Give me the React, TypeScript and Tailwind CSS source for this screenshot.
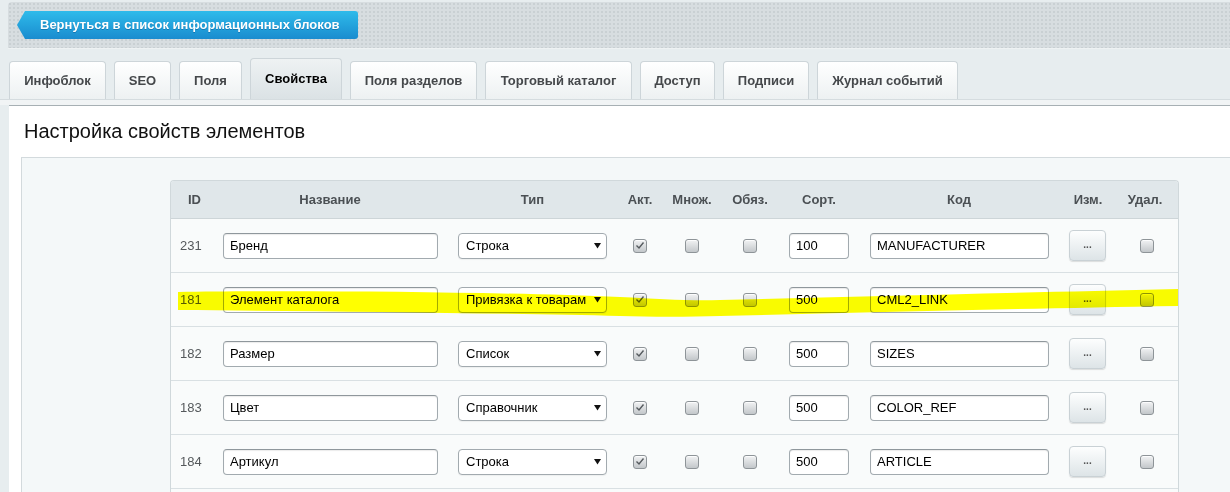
import React from "react";

type Row = { id: string; name: string; type: string; sort: string; code: string };

const rows: Row[] = [
  { id: "231", name: "Бренд", type: "Строка", sort: "100", code: "MANUFACTURER" },
  { id: "181", name: "Элемент каталога", type: "Привязка к товарам", sort: "500", code: "CML2_LINK" },
  { id: "182", name: "Размер", type: "Список", sort: "500", code: "SIZES" },
  { id: "183", name: "Цвет", type: "Справочник", sort: "500", code: "COLOR_REF" },
  { id: "184", name: "Артикул", type: "Строка", sort: "500", code: "ARTICLE" },
];

const tabs = [
  { label: "Инфоблок", w: "w-[97px]" },
  { label: "SEO", w: "w-[57px]" },
  { label: "Поля", w: "w-[63px]" },
  { label: "Свойства", w: "w-[92px]", active: true },
  { label: "Поля разделов", w: "w-[127px]" },
  { label: "Торговый каталог", w: "w-[147px]" },
  { label: "Доступ", w: "w-[75px]" },
  { label: "Подписи", w: "w-[86px]" },
  { label: "Журнал событий", w: "w-[141px]" },
];

function Checkbox({ checked }: { checked?: boolean }) {
  return (
    <div className="w-[14px] h-[14px] rounded-[3px] border border-[#8e9498] bg-linear-to-b from-[#f2f3f4] to-[#c3c7ca] shadow-[inset_0_1px_0_rgba(255,255,255,0.8)] flex items-center justify-center">
      {checked && (
        <svg width="10" height="9" viewBox="0 0 10 9">
          <path d="M1.5 4.5 L4 7 L8.5 1.5" fill="none" stroke="#555a5e" strokeWidth="1.4" />
        </svg>
      )}
    </div>
  );
}

function TextInput({ value, w }: { value: string; w: string }) {
  return (
    <div
      className={`${w} h-[26px] rounded-[4px] border border-[#a2aaaf] border-t-[#8f979c] bg-white shadow-[inset_0_1px_1px_rgba(0,0,0,0.08)] flex items-center pl-[6px] text-[13px] text-black overflow-hidden whitespace-nowrap`}
    >
      {value}
    </div>
  );
}

function Select({ value }: { value: string }) {
  return (
    <div className="w-[149px] h-[26px] rounded-[4px] border border-[#a2aaaf] bg-white shadow-[0_1px_1px_rgba(0,0,0,0.05)] flex items-center pl-[7px] pr-[5px] text-[13px] text-black">
      <span className="flex-1 overflow-hidden whitespace-nowrap">{value}</span>
      <svg width="7" height="7" viewBox="0 0 7 7" className="ml-[3px] shrink-0">
        <path d="M0 1 L7 1 L3.5 6.5 Z" fill="#111" />
      </svg>
    </div>
  );
}

const cols = "grid grid-cols-[47px_230px_169px_46px_58px_58px_80px_200px_58px_60px]";

export default function App() {
  return (
    <div className="relative w-[1230px] h-[492px] overflow-hidden bg-[#e7edef] font-['Liberation_Sans',Arial,sans-serif]">
      {/* top bar */}
      <div className="pt-[2px] pl-[8px]">
        <div className="h-[47px] rounded-tl-[4px] bg-[#d7dde0] bg-[radial-gradient(#c9d0d3_1px,transparent_1px)] bg-[length:4px_4px] border-b border-[#eef2f3] pt-[9px] pl-[9px]">
          <div className="w-[341px] h-[28px] rounded-r-[3px] bg-linear-to-b from-[#2fbbea] to-[#1a8ccf] [clip-path:polygon(8px_0,100%_0,100%_100%,8px_100%,0_50%)] flex items-center pl-[23px] text-white font-bold text-[13px] [text-shadow:0_1px_0_rgba(0,60,110,0.35)]">
            Вернуться в список информационных блоков
          </div>
        </div>
      </div>

      {/* tabs */}
      <div className="h-[50px] flex items-end gap-[8px] pl-[9px]">
        {tabs.map((t) => (
          <div
            key={t.label}
            className={`${t.w} ${
              t.active
                ? "h-[41px] bg-linear-to-b from-[#eef2f3] to-[#dbe2e5] text-black"
                : "h-[38px] bg-linear-to-b from-white to-[#edf1f2] text-[#45484b]"
            } rounded-t-[4px] border border-b-0 border-[#cdd5d9] flex items-center justify-center text-[13px] font-bold whitespace-nowrap`}
          >
            {t.label}
          </div>
        ))}
      </div>
      <div className="h-[6px] bg-[#f1f4f5] border-t border-[#d5dcdf]" />

      {/* content */}
      <div className="ml-[9px] bg-white border-t border-[#a7b0b4]">
        <div className="pt-[13px] pb-[14px] pl-[15px] text-[20px] leading-[24px] text-[#111]">
          Настройка свойств элементов
        </div>
        <div className="ml-[12px] border-t border-l border-[#d3dadd] bg-[#f4f8f9] pt-[22px] pl-[148px] h-[400px]">
          <div className="w-[1009px] rounded-t-[4px] border border-b-0 border-[#d0d8db] overflow-hidden">
            <div className={`${cols} h-[38px] bg-[#e0e7ea] border-b border-[#cdd5d8] text-[13px] font-bold text-[#4b5054]`}>
              <div className="flex items-center justify-center">ID</div>
              <div className="flex items-center justify-center pr-[6px]">Название</div>
              <div className="flex items-center justify-center">Тип</div>
              <div className="flex items-center justify-center">Акт.</div>
              <div className="flex items-center justify-center">Множ.</div>
              <div className="flex items-center justify-center">Обяз.</div>
              <div className="flex items-center justify-center">Сорт.</div>
              <div className="flex items-center justify-center">Код</div>
              <div className="flex items-center justify-center">Изм.</div>
              <div className="flex items-center justify-center pr-[4px]">Удал.</div>
            </div>
            {rows.map((r) => (
              <div key={r.id} className={`${cols} h-[54px] bg-[#f9fbfb] border-b border-[#d9e0e3] text-[13px]`}>
                <div className="flex items-center pl-[9px] text-[#55595c]">{r.id}</div>
                <div className="flex items-center pl-[5px]">
                  <TextInput value={r.name} w="w-[215px]" />
                </div>
                <div className="flex items-center pl-[10px]">
                  <Select value={r.type} />
                </div>
                <div className="flex items-center justify-center">
                  <Checkbox checked />
                </div>
                <div className="flex items-center justify-center">
                  <Checkbox />
                </div>
                <div className="flex items-center justify-center">
                  <Checkbox />
                </div>
                <div className="flex items-center pl-[10px]">
                  <TextInput value={r.sort} w="w-[60px]" />
                </div>
                <div className="flex items-center pl-[11px]">
                  <TextInput value={r.code} w="w-[179px]" />
                </div>
                <div className="flex items-center pl-[10px]">
                  <div className="w-[37px] h-[31px] rounded-[4px] border border-[#c9d1d5] bg-linear-to-b from-[#fdfefe] to-[#dde4e7] shadow-[0_1px_1px_rgba(0,0,0,0.12)] flex items-center justify-center text-[10px] font-bold text-[#555] leading-none pb-[2px]">
                    ...
                  </div>
                </div>
                <div className="flex items-center justify-center">
                  <Checkbox />
                </div>
              </div>
            ))}
            <div className="h-[54px] bg-[#f9fbfb]" />
          </div>
        </div>
      </div>

      {/* yellow highlighter stroke */}
      <svg
        className="absolute left-0 top-0 pointer-events-none mix-blend-multiply"
        width="1230"
        height="492"
        viewBox="0 0 1230 492"
      >
        <path
          d="M178,292 C300,290 500,292 620,297 C660,299 690,301 720,300 C850,297 1000,293 1178,289 L1178,306 C1000,309 850,313 720,316 C690,317 650,317 620,316 C500,313 300,311 178,310 Z"
          fill="#ffff00"
        />
      </svg>
    </div>
  );
}
